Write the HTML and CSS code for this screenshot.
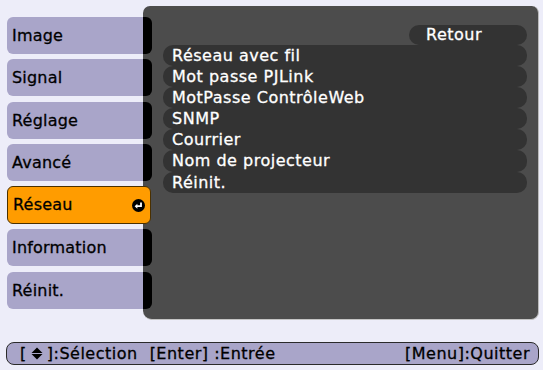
FILE: index.html
```html
<!DOCTYPE html>
<html lang="fr">
  <head>
    <meta charset="UTF-8" />
    <meta name="viewport" content="width=device-width, initial-scale=1.0" />
    <title>Réseau</title>
    <link rel="stylesheet" href="styles.css">
  </head>

  <body>
    <div class="screen">
      <div class="main">
        <div class="tabs">
          <div class="tab">Image</div>
          <div class="tab">Signal</div>
          <div class="tab">Réglage</div>
          <div class="tab">Avancé</div>
          <div class="tab active">
            <span>Réseau</span>
            <svg class="enter" width="13" height="13" viewBox="0 0 13 13">
              <circle cx="6.5" cy="6.5" r="6.5" fill="#000" />
              <path d="M9 3.5 V7.2 H4.6" fill="none" stroke="#fff" stroke-width="1.8" />
              <path d="M2.6 7.2 L5.4 4.7 V9.7 Z" fill="#fff" />
            </svg>
          </div>
          <div class="tab">Information</div>
          <div class="tab">Réinit.</div>
        </div>

        <div class="panel">
          <div class="back-row">
            <div class="back">Retour</div>
          </div>
          <div class="list">
            <div class="item">Réseau avec fil</div>
            <div class="item">Mot passe PJLink</div>
            <div class="item">MotPasse ContrôleWeb</div>
            <div class="item">SNMP</div>
            <div class="item">Courrier</div>
            <div class="item">Nom de projecteur</div>
            <div class="item">Réinit.</div>
          </div>
        </div>
      </div>

      <div class="help">
        <span class="key">[<svg class="updown" width="12" height="13" viewBox="0 0 12 13">
            <path d="M6 0.5 L11.5 6 H0.5 Z" fill="#000" />
            <path d="M0.5 7 H11.5 L6 12.5 Z" fill="#000" />
          </svg>]:Sélection</span>
        <span class="key">[Enter] :Entrée</span>
        <span class="key quit">[Menu]:Quitter</span>
      </div>
    </div>
  </body>
</html>
```

FILE: styles.css
```css
* {
  margin: 0;
  padding: 0;
  box-sizing: border-box;
}

body {
  width: 543px;
  height: 370px;
  background: #ededf9;
  font-family: "DejaVu Sans", sans-serif;
  font-size: 16px;
  -webkit-text-stroke: 0.3px;
  overflow: hidden;
}

.screen {
  padding: 6px 4px 0 7px;
}

.main {
  display: flex;
  height: 315px;
}

.tabs {
  width: 145px;
  flex-shrink: 0;
  padding-top: 11px;
  display: flex;
  flex-direction: column;
  gap: 5.3px;
  position: relative;
  z-index: 1;
}

.tab {
  height: 37px;
  line-height: 37px;
  padding-left: 5px;
  border-radius: 6px;
  background: linear-gradient(to right, #a9a5c9 136px, #000 136px);
  color: #000;
  letter-spacing: 0.2px;
}

.tab.active {
  height: 38px;
  line-height: 36px;
  margin-right: 1px;
  display: flex;
  justify-content: space-between;
  align-items: center;
  padding-right: 5px;
  background: #ff9c00;
  border: 1px solid #4a3000;
}

.tab .enter {
  display: block;
}

.panel {
  flex: 1;
  margin-left: -9px;
  height: 314px;
  background: #4c4c4c;
  border-radius: 7px 7px 8px 9px;
  border-right: 1px solid #bcbcbc;
  border-bottom: 1px solid #c4c4c4;
  padding: 19px 11px 0 20px;
}

.back-row {
  display: flex;
  justify-content: flex-end;
}

.back {
  width: 118px;
  height: 20px;
  line-height: 20px;
  padding-left: 17px;
  border-radius: 10px;
  background: #333;
  color: #fff;
  letter-spacing: 0.5px;
}

.list {
  display: flex;
  flex-direction: column;
}

.item {
  height: 21.1px;
  line-height: 21px;
  padding-left: 9px;
  border-radius: 10px;
  background: #333;
  color: #fff;
  letter-spacing: 0.5px;
}

.help {
  margin: 21px 0 0 -1px;
  height: 23px;
  width: 533px;
  border: 1px solid #2a2a2a;
  border-radius: 8px;
  background: #a9a5c9;
  display: flex;
  align-items: center;
  padding: 0 8px 0 13px;
  gap: 12px;
  font-size: 16px;
  letter-spacing: 0.5px;
  color: #000;
}

.key {
  display: flex;
  align-items: center;
  white-space: pre;
}

.updown {
  margin: 0 4px;
}

.quit {
  margin-left: auto;
}
```
